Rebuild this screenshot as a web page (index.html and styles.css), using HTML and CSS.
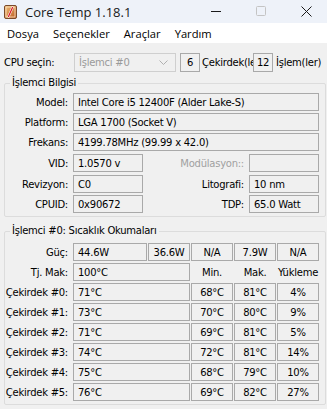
FILE: index.html
```html
<!DOCTYPE html>
<html lang="tr">
<head>
  <meta charset="UTF-8">
  <title>Core Temp 1.18.1</title>
  <link rel="stylesheet" href="styles.css">
</head>
<body>
  <div class="window">
    <div class="titlebar">
      <svg class="app-icon" width="13" height="14" viewBox="0 0 13 14">
        <defs>
          <linearGradient id="ig" x1="0" y1="0" x2="1" y2="1">
            <stop offset="0" stop-color="#f3c27a"/>
            <stop offset="1" stop-color="#b8561e"/>
          </linearGradient>
        </defs>
        <rect x="0.5" y="0.5" width="12" height="13" rx="1.5" fill="url(#ig)" stroke="#7a4a2a"/>
        <rect x="2" y="2" width="9" height="10" fill="none" stroke="#fbe6c8" stroke-width="0.8"/>
        <path d="M8.5 2.5 L4.5 11.5" stroke="#ffffff" stroke-width="2.2" stroke-linecap="round"/>
        <path d="M8.5 2.5 L4.5 11.5" stroke="#d8141e" stroke-width="1.2" stroke-linecap="round"/>
      </svg>
      <span class="title">Core Temp 1.18.1</span>
      <div class="controls">
        <span class="ctl"><svg width="11" height="11" viewBox="0 0 11 11"><path d="M0 5.5 H10" stroke="#1a1a1a" stroke-width="1"/></svg></span>
        <span class="ctl"><svg width="11" height="11" viewBox="0 0 11 11"><rect x="0.5" y="0.5" width="9" height="9" rx="1" fill="none" stroke="#c4c4c4"/></svg></span>
        <span class="ctl"><svg width="11" height="11" viewBox="0 0 11 11"><path d="M0.5 0.5 L10.5 10.5 M10.5 0.5 L0.5 10.5" stroke="#1a1a1a" stroke-width="1"/></svg></span>
      </div>
    </div>

    <nav class="menubar">
      <span>Dosya</span>
      <span>Seçenekler</span>
      <span>Araçlar</span>
      <span>Yardım</span>
    </nav>

    <div class="content">
      <div class="cpu-row">
        <span class="cpu-label">CPU seçin:</span>
        <div class="combo">
          <span>İşlemci #0</span>
          <svg width="9" height="6" viewBox="0 0 9 6"><path d="M0.5 0.5 L4.5 4.5 L8.5 0.5" fill="none" stroke="#b0b0b0"/></svg>
        </div>
        <span class="count">6</span>
        <span class="count-label clip">Çekirdek(ler)</span>
        <span class="count tight">12</span>
        <span class="count-label">İşlem(ler)</span>
      </div>

      <fieldset class="group info">
        <legend>İşlemci Bilgisi</legend>
        <div class="info-grid">
          <span class="lbl">Model:</span>
          <span class="box wide">Intel Core i5 12400F (Alder Lake-S)</span>
          <span class="lbl">Platform:</span>
          <span class="box wide">LGA 1700 (Socket V)</span>
          <span class="lbl">Frekans:</span>
          <span class="box wide">4199.78MHz (99.99 x 42.0)</span>
          <span class="lbl">VID:</span>
          <span class="box">1.0570 v</span>
          <span class="lbl disabled">Modülasyon::</span>
          <span class="box"></span>
          <span class="lbl">Revizyon:</span>
          <span class="box">C0</span>
          <span class="lbl">Litografi:</span>
          <span class="box">10 nm</span>
          <span class="lbl">CPUID:</span>
          <span class="box">0x90672</span>
          <span class="lbl">TDP:</span>
          <span class="box">65.0 Watt</span>
        </div>
      </fieldset>

      <fieldset class="group temps">
        <legend>İşlemci #0: Sıcaklık Okumaları</legend>
        <div class="temp-grid" id="temp-grid">
          <span class="lbl">Güç:</span>
          <span class="box">44.6W</span>
          <span class="box c">36.6W</span>
          <span class="box c">N/A</span>
          <span class="box c">7.9W</span>
          <span class="box c">N/A</span>
          <span class="lbl">Tj. Mak:</span>
          <span class="box span2">100°C</span>
          <span class="head">Min.</span>
          <span class="head">Mak.</span>
          <span class="head">Yükleme</span>
        </div>
      </fieldset>
    </div>
  </div>

  <script>
    const cores = [
      { temp: 71, min: 68, max: 81, load: 4 },
      { temp: 73, min: 70, max: 80, load: 9 },
      { temp: 71, min: 69, max: 81, load: 5 },
      { temp: 74, min: 72, max: 81, load: 14 },
      { temp: 75, min: 68, max: 79, load: 10 },
      { temp: 76, min: 69, max: 82, load: 27 }
    ];
    const grid = document.getElementById("temp-grid");
    cores.forEach((core, i) => {
      grid.insertAdjacentHTML("beforeend", `
        <span class="lbl">Çekirdek #${i}:</span>
        <span class="box span2">${core.temp}°C</span>
        <span class="box c">${core.min}°C</span>
        <span class="box c">${core.max}°C</span>
        <span class="box c">${core.load}%</span>
      `);
    });
  </script>
</body>
</html>
```

FILE: styles.css
```css
body {
  margin: 0;
  background: #f0f0f0;
  font-family: 'DejaVu Sans', sans-serif;
  font-size: 10px;
  letter-spacing: -0.25px;
  color: #000;
}
.window {
  width: 327px;
  height: 409px;
  overflow: hidden;
  background: #f0f0f0;
}
.titlebar {
  height: 23px;
  background: #eef2f9;
  display: flex;
  align-items: center;
  font-family: 'Open Sans', sans-serif;
  font-size: 13px;
  letter-spacing: 0;
  color: #1a1a1a;
}
.app-icon {
  margin: 0 8px 0 4px;
}
.title {
  flex: 1;
}
.controls {
  display: flex;
  height: 100%;
  margin-right: -2px;
}
.ctl {
  width: 45px;
  display: flex;
  align-items: center;
  justify-content: center;
}
.menubar {
  height: 20px;
  background: #ffffff;
  display: flex;
  align-items: center;
  gap: 14px;
  padding-left: 7px;
  font-family: 'Open Sans', sans-serif;
  font-size: 11.2px;
  letter-spacing: 0;
}
.content {
  padding-top: 10px;
}
.cpu-row {
  display: flex;
  align-items: center;
  height: 19px;
  padding-left: 4px;
}
.cpu-label {
  width: 70px;
}
.combo {
  width: 102px;
  height: 19px;
  border: 1px solid #cfcfcf;
  background: #f0f0f0;
  display: flex;
  align-items: center;
  justify-content: space-between;
  padding: 0 7px 0 4px;
  box-sizing: border-box;
  color: #9a9a9a;
}
.count {
  width: 20px;
  height: 19px;
  box-sizing: border-box;
  border: 1px solid #a9a9a9;
  display: flex;
  align-items: center;
  justify-content: center;
  margin-left: 4px;
}
.count.tight {
  margin-left: 0;
}
.count-label {
  margin-left: 3px;
}
.count-label.clip {
  margin-left: 2px;
  width: 51px;
  overflow: hidden;
  white-space: nowrap;
}
.group {
  margin: 5px 1px 0 4px;
  padding: 4px 6px 3px 0;
  border: 1px solid #dcdcdc;
  border-radius: 2px;
}
.group legend {
  padding: 0 2px;
  margin-left: 5px;
  line-height: 12px;
}
.temps {
  margin-top: 8px;
  padding-top: 6px;
}
.info-grid {
  display: grid;
  grid-template-columns: 63px 70px 1fr 70px;
  grid-template-rows: 18px 18px 18px 19px 19px 18px;
  column-gap: 5px;
  row-gap: 2px;
  align-items: end;
}
.temp-grid {
  display: grid;
  grid-template-columns: 67px 74px 42px 42px 42px 42px;
  grid-auto-rows: 18px;
  column-gap: 1px;
  row-gap: 2px;
  align-items: center;
}
.temp-grid .lbl {
  margin-right: 4px;
}
.lbl {
  height: 18px;
  display: flex;
  align-items: center;
  justify-content: flex-end;
  white-space: nowrap;
}
.disabled {
  color: #a0a0a0;
}
.box {
  height: 18px;
  box-sizing: border-box;
  border: 1px solid #a9a9a9;
  padding: 0 4px;
  display: flex;
  align-items: center;
  white-space: nowrap;
}
.box.wide {
  grid-column: span 3;
}
.box.span2 {
  grid-column: span 2;
}
.box.c {
  justify-content: center;
}
.head {
  text-align: center;
}
```
